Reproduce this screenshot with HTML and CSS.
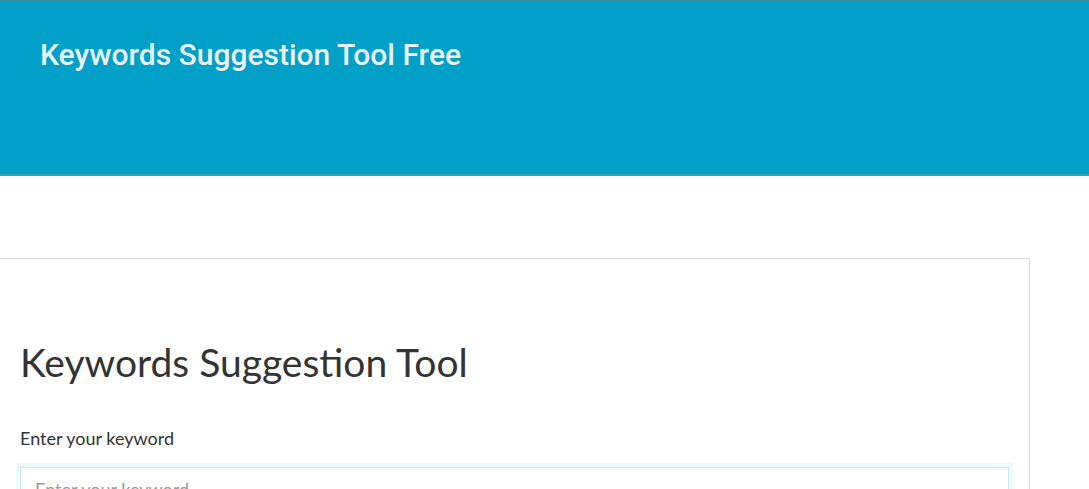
FILE: index.html
```html
<!DOCTYPE html>
<html lang="en">
<head>
<meta charset="utf-8">
<title>Keywords Suggestion Tool Free</title>
<link rel="stylesheet" href="styles.css">
</head>
<body>
<header class="site-header">
  <h1 class="site-title">Keywords Suggestion Tool Free</h1>
</header>
<main class="main">
  <section class="card">
    <h2 class="card-title">Keywords Suggestion Tool</h2>
    <form class="form">
      <label class="label" for="kw">Enter your keyword</label>
      <input class="input" id="kw" type="text" placeholder="Enter your keyword">
    </form>
  </section>
</main>
</body>
</html>
```
FILE: styles.css
```css
* { box-sizing: border-box; }
html, body { margin: 0; padding: 0; background: #ffffff; }
body { font-family: Lato, "Open Sans", sans-serif; color: #333333; }

.site-header {
  height: 176px;
  background: #00a0c8;
  border-top: 1px solid #3a8ea3;
  border-bottom: 2px solid #2aa6c2;
  padding: 36px 40px 0;
}
.site-title {
  margin: 0;
  font-family: Roboto, "Noto Sans", sans-serif;
  font-weight: 500;
  font-size: 30px;
  line-height: 36px;
  color: #e9f3f5;
  letter-spacing: 0;
}

.main { padding-top: 82px; }
.card {
  width: 1030px;
  border: 1px solid #dcdcdc;
  border-left: none;
  padding: 79px 20px 0 20px;
  height: 260px;
}
.card-title {
  margin: 0 0 40px 0;
  font-family: Lato, "Open Sans", sans-serif;
  font-weight: 400;
  font-size: 39px;
  line-height: 48px;
  color: #333333;
}
.form { display: flex; flex-direction: column; }
.label {
  font-size: 18px;
  line-height: 24px;
  color: #333333;
  margin-bottom: 17px;
}
.input {
  width: 100%;
  height: 48px;
  border: 1px solid #c9e9f1;
  box-shadow: 0 0 0 4px #eef9fc;
  padding: 9px 14px 13px;
  font-family: Lato, "Open Sans", sans-serif;
  font-size: 18px;
  line-height: 24px;
  color: #333;
  outline: none;
  border-radius: 0;
}
.input::placeholder { color: #999999; }
```
